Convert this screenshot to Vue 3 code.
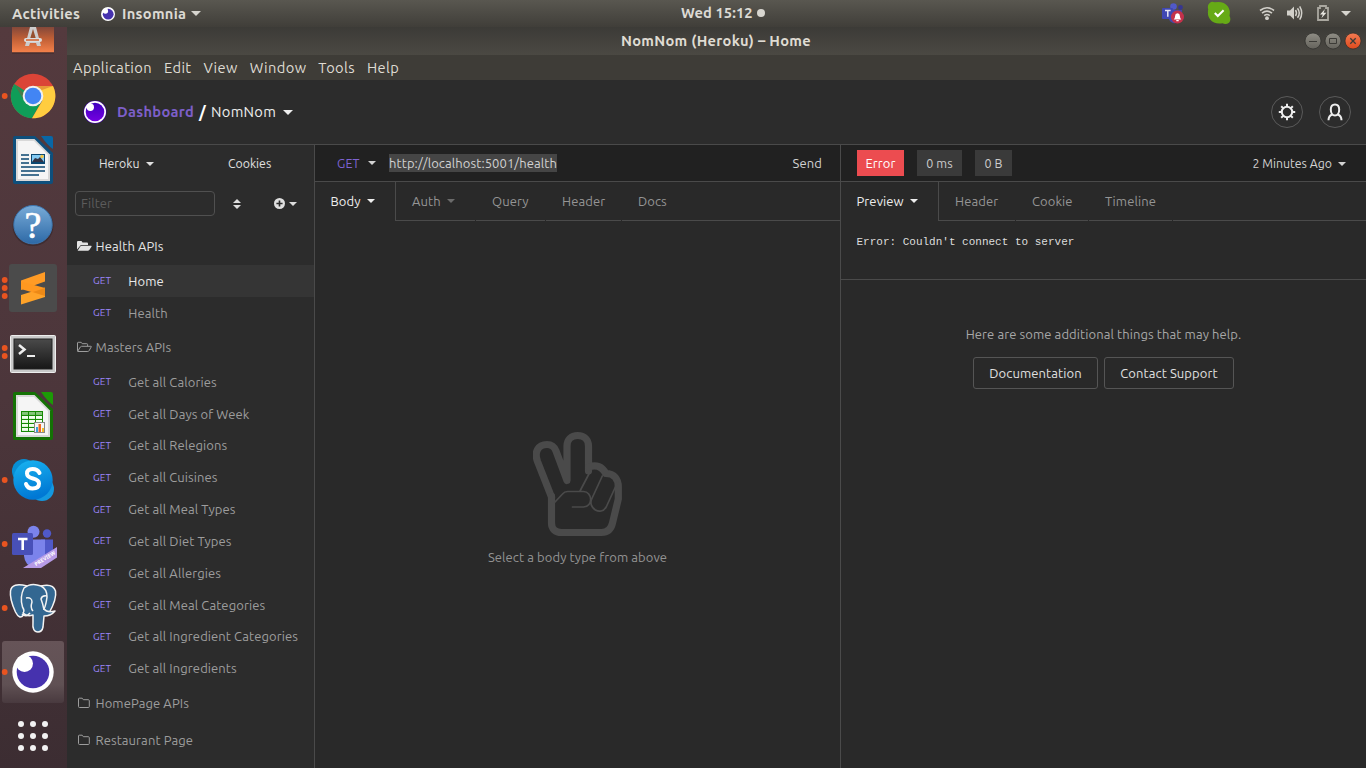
<script setup>
const dots = { one: [0], two: [-4, 4], three: [-8, 0, 8] }
const dock = [
  { id: 'chrome', dots: dots.one },
  { id: 'writer', dots: [] },
  { id: 'help', dots: [] },
  { id: 'sublime', dots: dots.three },
  { id: 'terminal', dots: dots.two },
  { id: 'calc', dots: [] },
  { id: 'skype', dots: dots.one },
  { id: 'teams', dots: dots.one },
  { id: 'postgres', dots: dots.one },
  { id: 'insomnia', dots: dots.one },
  { id: 'grid', dots: [] },
]
const menus = ['Application', 'Edit', 'View', 'Window', 'Tools', 'Help']
const folders = [
  { name: 'Health APIs', icon: 'solid', active: true, items: ['Home', 'Health'] },
  {
    name: 'Masters APIs', icon: 'open',
    items: ['Get all Calories', 'Get all Days of Week', 'Get all Relegions', 'Get all Cuisines', 'Get all Meal Types',
      'Get all Diet Types', 'Get all Allergies', 'Get all Meal Categories', 'Get all Ingredient Categories', 'Get all Ingredients'],
  },
  { name: 'HomePage APIs', icon: 'closed', items: [] },
  { name: 'Restaurant Page', icon: 'closed', items: [] },
]
</script>

<template>
  <div class="desktop">
    <header class="topbar">
      <b class="activities">Activities</b>
      <svg class="tb-logo" viewBox="0 0 14 14"><circle cx="7" cy="7" r="7" fill="#fff" /><circle cx="7.2" cy="7.2" r="5.4" fill="#4632ae" /><circle cx="4.4" cy="4" r="2.7" fill="#fff" /></svg>
      <b class="appname">Insomnia</b>
      <svg class="tb-caret" viewBox="0 0 10 5"><path d="M0 0h10L5 5z" fill="#d6d4ce" /></svg>
      <div class="clock"><b>Wed 15:12</b><i></i></div>
      <svg class="tray" viewBox="1150 0 216 27">
        <circle cx="1173.500" cy="6.500" r="3.300" fill="#5059c9" /><circle cx="1180.500" cy="7.500" r="2.400" fill="#37368f" />
        <path d="M1168 10h14v8q-4 6-9 5-5-2-5-8z" fill="#4549a8" /><rect x="1162" y="8" width="11" height="11" rx="1" fill="#4048b4" />
        <path d="M1165 10.500h5.600M1167.800 10.500v6.200" stroke="#e6e6f4" stroke-width="1.500" fill="none" />
        <circle cx="1177.500" cy="17" r="6.500" fill="#c4314b" /><path d="M1173.700 19.500q1.400-1 1.400-3.500 0-2.600 2.400-2.800 2.400.2 2.400 2.800 0 2.500 1.400 3.500zM1176.300 20h2.400v1.200h-2.400z" fill="#fff" />
        <path transform="translate(.7 0)" d="M1209 3q2-2 5-.8 9-1.500 13 4 3 4 1.800 9.500 2 4-.5 7-3 2-6.500.6-8 1.500-12.500-4-3-4-1.800-10-1.200-4 1.500-6.300z" fill="#66aa16" />
        <path d="M1214.800 13l3 3 5.800-5.800" fill="none" stroke="#fff" stroke-width="2" />
        <g fill="none" stroke="#d2d0ca" stroke-width="1.600"><path d="M1260 10.500q7-5.500 14 0M1262 13.200q5-4.200 10 0M1264.200 15.600q2.800-2.200 5.600 0" /></g><circle cx="1267" cy="18.200" r="1.900" fill="#d2d0ca" />
        <path d="M1287 10.500h3l4-4v13l-4-4h-3z" fill="#d2d0ca" /><g fill="none" stroke="#d2d0ca" stroke-width="1.500"><path d="M1295.500 10q2 3 0 6M1297.500 8.200q3.500 4.800 0 9.600M1299.700 6.300q4 6.700 0 13.400" /></g>
        <path d="M1318 8h2v-2h6v2h2v12h-10z" fill="none" stroke="#aaa8a0" stroke-width="1.800" /><path d="M1325 9l-5 5.600h2.800l-1.400 3.600 5-5.400h-2.800z" fill="#e8e6e0" />
        <path d="M1341 11h10l-5 5z" fill="#d6d4ce" />
      </svg>
    </header>

    <div class="workspace">
      <nav class="dock">
        <svg class="slot first" viewBox="0 27 67 37">
          <defs><linearGradient id="sw" x2="0" y2="1"><stop stop-color="#79443a" /><stop offset=".5" stop-color="#c05f36" /><stop offset="1" stop-color="#f5824b" /></linearGradient></defs>
          <rect x="12" y="25" width="42" height="27.500" fill="url(#sw)" /><path d="M12 53h42" stroke="#3c2828" />
          <path d="M30 27h6l5 19h-4l-1-3h-6l-1 3h-4z" fill="#ccc" /><path d="M33 29l3 10h-6z" fill="#96502f" /><rect x="24" y="38" width="18" height="4" rx="2" fill="#ddd" /><path d="M26 40h13" stroke="#d3602c" stroke-width="1.500" />
        </svg>
        <svg v-for="a in dock" :key="a.id" class="slot" viewBox="0 0 67 64">
          <g v-if="a.id === 'chrome'">
            <circle cx="33" cy="32" r="22.300" fill="#db4437" />
            <path d="M14.300 20A22.300 22.300 0 0 0 32 54.300L42.500 36 33 32z" fill="#0f9d58" />
            <path d="M32 54.300A22.300 22.300 0 0 0 53 22H33v10l9.500 4.500z" fill="#ffcd40" />
            <path d="M33 22h20l-11 4zM14.500 20l9 16 1-6z" fill="#b93a2d" opacity=".35" />
            <circle cx="33" cy="32" r="10.300" fill="#f1f1f1" /><circle cx="33" cy="32" r="8.300" fill="#4285f4" />
          </g>
          <g v-else-if="a.id === 'writer' || a.id === 'calc'" :class="a.id">
            <path class="edge" d="M15 8h20l18 17v29q0 2-2 2H15q-2 0-2-2V10q0-2 2-2z" />
            <path class="corner" d="M41 8h10q2 0 2 2v11q-5-3-12-13z" />
            <path d="M16 11h18.500L50 26.500V53H16z" fill="#d8d8d8" /><path d="M18 13h16l14 14v24H18z" fill="#f5f5f5" />
            <g v-if="a.id === 'writer'">
              <path d="M21 27h8M21 31h8M21 35h8M21 39h24M21 43h24M21 47h18" stroke="#0b4770" stroke-width="1.700" />
              <rect x="31" y="26" width="14" height="10" fill="#0b4770" /><path d="M32 27h12v7H32z" fill="#83caf3" /><path d="M32 34l3-4 3 1 2-2 4 5z" fill="#334" /><circle cx="42" cy="28.500" r="1.700" fill="#f2c544" />
            </g>
            <g v-else>
              <rect x="21" y="27" width="22" height="21" fill="#178a05" /><g fill="#f3fff0"><g v-for="r in 5" :key="r"><rect v-for="c in 3" :key="c" :x="15 + c * 7" :y="24 + r * 4" width="6" height="2.900" :opacity="r === 1 ? .5 : 1" /></g></g>
              <rect x="34.500" y="38.500" width="10" height="10" fill="#f5f5f5" stroke="#888" /><rect x="36" y="43" width="2" height="5" fill="#3ba0dc" /><rect x="38.500" y="40" width="2.500" height="8" fill="#ef6a22" /><rect x="42" y="44" width="2" height="4" fill="#f5bd2b" />
            </g>
          </g>
          <g v-else-if="a.id === 'help'">
            <defs><linearGradient id="hp" x2="0" y2="1"><stop stop-color="#78abd8" /><stop offset="1" stop-color="#2d69a6" /></linearGradient></defs>
            <ellipse cx="33" cy="34" rx="20.500" ry="20" fill="#302126" opacity=".5" />
            <circle cx="33" cy="32.700" r="19.200" fill="url(#hp)" stroke="#3c76b0" /><text x="33" y="46" text-anchor="middle" class="question">?</text>
          </g>
          <g v-else-if="a.id === 'sublime'">
            <rect x="9" y="8" width="48" height="48" rx="3" fill="#4b4b4b" />
            <path d="M21 24.500l24-8.500v9.500l-24 8.500z" fill="#ff9b25" /><path d="M21 39l24-7.500V41l-24 7.500z" fill="#ffa329" /><path d="M21 25.500l24 6.500v8l-24-7z" fill="#ff9820" /><path d="M33 36l12-4v8z" fill="#dc7d10" opacity=".55" />
          </g>
          <g v-else-if="a.id === 'terminal'">
            <defs><linearGradient id="tm" x2="0" y2="1"><stop stop-color="#4a4a4a" /><stop offset="1" stop-color="#171717" /></linearGradient></defs>
            <rect x="10.500" y="15.500" width="45" height="37" rx="1" fill="#c9c9c9" stroke="#eee" /><rect x="14" y="19" width="38" height="30" fill="url(#tm)" stroke="#222" />
            <path d="M19 25l5.500 4.500L19 34" fill="none" stroke="#eee" stroke-width="2.500" /><path d="M27 36h8" stroke="#eee" stroke-width="2" />
          </g>
          <g v-else-if="a.id === 'skype'">
            <defs><linearGradient id="sk" x2=".3" y2="1"><stop stop-color="#1ab5f1" /><stop offset="1" stop-color="#0078d4" /></linearGradient></defs>
            <circle cx="24" cy="23" r="12" fill="#078fd5" /><circle cx="42" cy="41" r="12" fill="#1498df" /><circle cx="33" cy="32" r="19.700" fill="url(#sk)" />
            <path d="M39.500 25q-2-4-7-4-5.500 0-5.500 4.500 0 3.500 6 5t6 5q0 5-6.500 5-5 0-6.500-4.500" fill="none" stroke="#fff" stroke-width="4" stroke-linecap="round" />
          </g>
          <g v-else-if="a.id === 'teams'" transform="translate(0 2)">
            <circle cx="47" cy="19.500" r="4.200" fill="#5059c9" /><path d="M41 25.500h12v14q-2 7-10 5z" fill="#5059c9" />
            <circle cx="33.500" cy="17.800" r="6" fill="#7b83eb" /><path d="M24 25.500h21V42q-2 11-11 11-9-1-10-11z" fill="#7b83eb" />
            <rect x="12" y="19" width="21" height="22" rx="1.500" fill="#4850b8" /><path d="M18 25h9.500M22.700 25v11" stroke="#fff" stroke-width="2.600" fill="none" />
            <path d="M57 33v10.500L41 54H23z" fill="#b79be6" /><text class="preview" transform="translate(36 52.300) rotate(-32)">PREVIEW</text>
          </g>
          <g v-else-if="a.id === 'postgres'" fill="#336791" stroke="#f3f3f3" stroke-width="1.500" stroke-linejoin="round">
            <path d="M41 10q12-3 14.500 5 1.500 8-6.500 22l-7-1z" />
            <path d="M27 10Q12 6 10.500 15q-1 8 5 21 4 8 8 3l3-4z" />
            <path d="M24 12q7-6 17-2 6 3 6 11-1 8-3 12 3 4 11 2-4 5-11 5l-1 11q-1 5-5 5-6 0-5-10v-7q-6 2-10-2 2-2-.500-6-3-10 1.500-19z" />
            <path d="M26 22q6-1 6 4-2 6 1 9M47 20q-5-1-6 3 2 5 3 11" fill="none" />
            <path d="M22 38q4 4 8-1" fill="none" />
          </g>
          <g v-else-if="a.id === 'insomnia'">
            <defs><linearGradient id="hl" x2="0" y2="1"><stop stop-color="#665458" /><stop offset=".7" stop-color="#605154" /><stop offset="1" stop-color="#493a3f" /></linearGradient></defs>
            <rect x="2" y="1" width="62" height="62" rx="3" fill="url(#hl)" />
            <circle cx="33" cy="32" r="20.700" fill="#fff" /><circle cx="33" cy="32" r="16.300" fill="#4632ae" /><circle cx="24.500" cy="23.500" r="8.500" fill="#fff" />
          </g>
          <g v-else fill="#f2f2f2"><g v-for="r in 3" :key="r"><circle v-for="c in 3" :key="c" :cx="9 + c * 12" :cy="8 + r * 12" r="3" /></g></g>
          <circle v-for="d in a.dots" :key="d" cx="4.700" :cy="32 + d" r="2.900" fill="#e95420" />
        </svg>
      </nav>

      <main class="window">
        <div class="titlebar">
          <b>NomNom (Heroku) – Home</b>
          <svg class="winbtns" viewBox="0 0 60 20">
            <defs><linearGradient id="wb" x2="0" y2="1"><stop stop-color="#8f8d85" /><stop offset="1" stop-color="#65635c" /></linearGradient><linearGradient id="wc" x2="0" y2="1"><stop stop-color="#f47b52" /><stop offset="1" stop-color="#df4a1d" /></linearGradient></defs>
            <g stroke="#2d2c29" stroke-width=".7"><circle cx="10" cy="10" r="8" fill="url(#wb)" /><circle cx="30" cy="10" r="8" fill="url(#wb)" /><circle cx="50" cy="10" r="8" fill="url(#wc)" /></g>
            <g fill="none" stroke="#3c3b37"><path d="M6 10.500h8M26.500 7.500h7v5h-7z" /><path d="M47.300 7.300l5.400 5.400M52.700 7.300l-5.400 5.400" stroke-width="1.300" /></g>
          </svg>
        </div>
        <div class="menubar"><span v-for="m in menus" :key="m">{{ m }}</span></div>
        <div class="apphead">
          <svg class="logo" viewBox="0 0 24 24"><defs><linearGradient id="lg" x2="0" y2="1"><stop stop-color="#4000bf" /><stop offset="1" stop-color="#7400e1" /></linearGradient></defs><circle cx="12" cy="12" r="11.500" fill="#3c009c" /><circle cx="12" cy="12" r="11" fill="#fff" /><circle cx="12" cy="12" r="9.300" fill="url(#lg)" /><circle cx="7.300" cy="7.300" r="3.700" fill="#fff" /></svg>
          <b class="dash">Dashboard</b><b class="slash">/</b><span class="project">NomNom</span><i class="caret big"></i>
          <div class="round gear"><svg viewBox="0 0 20 20" fill="none" stroke="#eee"><circle cx="10" cy="10" r="5.200" stroke-width="2" /><path d="M10 1.800v2.500M10 15.700v2.500M1.800 10h2.500M15.700 10h2.500M4.200 4.200l1.900 1.900M13.900 13.900l1.900 1.900M15.800 4.200l-1.900 1.900M6.100 13.900l-1.900 1.900" stroke-width="2" /></svg></div>
          <div class="round"><svg viewBox="0 0 20 20" fill="none" stroke="#eee" stroke-width="2"><path d="M10 2.500c-3 0-4.200 2.200-4.200 5 0 3.500 1.700 6 4.200 6s4.200-2.500 4.200-6c0-2.800-1.200-5-4.200-5zM7.200 12.500Q3.500 14 3.500 18.300M12.800 12.500q3.700 1.500 3.700 5.800" /></svg></div>
        </div>

        <div class="panes">
          <aside class="sidebar">
            <div class="envrow"><span class="env">Heroku<i class="caret"></i></span><span class="cookies">Cookies</span></div>
            <div class="filterrow">
              <div class="filter">Filter</div>
              <svg class="sort" viewBox="0 0 8 10"><path d="M4 0l4 4H0zM0 6h8l-4 4z" fill="#ddd" /></svg>
              <svg class="plus" viewBox="0 0 10 10"><circle cx="5" cy="5" r="5" fill="#e0e0e0" /><path d="M5 2.200v5.600M2.200 5h5.600" stroke="#2c2c2c" stroke-width="1.500" /></svg>
              <i class="caret"></i>
            </div>
            <div v-for="f in folders" :key="f.name">
              <div class="folder" :class="{ active: f.active }">
                <svg v-if="f.icon === 'solid'" viewBox="0 0 15 12"><path d="M0 9.500V2q0-1 1-1h3.500l1 1.500H10q1 0 1 1V5H4.500q-1 0-1.500 1z" fill="currentColor" /><path d="M4.500 5.800H14q1 0 .5 1L12.300 10q-.5.800-1.500.8H.6L3.300 6.500q.4-.7 1.200-.7z" fill="currentColor" /></svg>
                <svg v-else-if="f.icon === 'open'" viewBox="0 0 15 12"><path d="M.5 9.800V2q0-.7.700-.7h3l1 1.400h4.600q.8 0 .8.800v1.800M.7 10.300L3.300 6q.5-.7 1.200-.7h9.300q.8 0 .4.700L12 9.800q-.4.700-1.200.7H1q-.5 0-.5-.7" fill="none" stroke="currentColor" /></svg>
                <svg v-else viewBox="0 0 15 12"><path d="M1.500 2q0-.8.800-.8h2.900l1.100 1.500h5q1 0 1 1v5.800q0 1-1 1h-8.800q-1 0-1-1z" fill="none" stroke="currentColor" /></svg>
                <span>{{ f.name }}</span>
              </div>
              <div v-for="r in f.items" :key="r" class="req" :class="{ active: r === 'Home' }"><em>GET</em><span>{{ r }}</span></div>
            </div>
          </aside>

          <section class="request">
            <div class="urlrow"><span class="method">GET</span><i class="caret"></i><span class="url">http://localhost:5001/health</span><span class="send">Send</span></div>
            <div class="tabs">
              <div class="tab current t-body">Body<i class="caret"></i></div>
              <div class="tab t-auth">Auth<i class="caret"></i></div>
              <div class="tab t-query">Query</div>
              <div class="tab t-header">Header</div>
              <div class="tab rest">Docs</div>
            </div>
            <div class="empty">
              <svg class="hand" viewBox="533 431 90 106" fill="none" stroke="#4a4a4a" stroke-linejoin="round" stroke-linecap="round">
                <path d="M551.500 497L537.500 461.500C534 452 538 444.500 547 444.500c5 0 7.500 2.500 9 6.500l11 29.500V446c0-6 4-10.500 10.700-10.500S588.500 440 588.500 446v25" stroke-width="7.200" />
                <path d="M551.500 496v27c0 6 4 9.500 10 9.500h40c6 0 9.500-3 11-9.500l5.800-24v-12c0-8-4-13.500-12.500-13.500-3.500-6.500-9.500-9.500-17-6.500" stroke-width="7.200" />
                <g stroke-width="1.700"><path d="M555 502l7.500-8q2-2.500 5-2.500h16c9 0 10 15.500 0 15.500h-11M580 491l11-21M591.700 499l10.600-23M591.700 499c-4 9 9 17.500 14.500 8l11.500-25" /></g>
              </svg>
              <p>Select a body type from above</p>
            </div>
          </section>

          <section class="response">
            <div class="urlrow"><span class="tag err">Error</span><span class="tag ms">0 ms</span><span class="tag bytes">0 B</span><span class="ago">2 Minutes Ago<i class="caret"></i></span></div>
            <div class="tabs">
              <div class="tab current t-preview">Preview<i class="caret"></i></div>
              <div class="tab t-rheader">Header</div>
              <div class="tab t-cookie">Cookie</div>
              <div class="tab t-time">Timeline</div>
              <div class="tab rest"></div>
            </div>
            <pre class="error">Error: Couldn't connect to server</pre>
            <div class="help">
              <p>Here are some additional things that may help.</p>
              <div class="btns"><button class="doc">Documentation</button><button class="sup">Contact Support</button></div>
            </div>
          </section>
        </div>
      </main>
    </div>
  </div>
</template>

<style>
body { overflow: hidden; background: #2c2c2c; }
</style>
<style scoped>
* { box-sizing: border-box; }
.desktop { width: 1366px; height: 768px; overflow: hidden; display: flex; flex-direction: column; font: 13px/16px Ubuntu, "Noto Sans", sans-serif; letter-spacing: .09px; color: #ddd; white-space: nowrap; }
svg { display: block; flex: none; }
p { margin: 0; }
.topbar { height: 27px; flex: none; display: flex; align-items: center; position: relative; background: linear-gradient(#595750, #403e39); color: #dcdad4; font-size: 14.670px; letter-spacing: .3px; padding-left: 12px; }
.activities { width: 89px; }
.tb-logo { width: 14px; height: 14px; }
.appname { margin-left: 7px; width: 69px; }
.tb-caret { width: 10px; height: 5px; }
.clock { position: absolute; left: 681px; top: 5px; display: flex; align-items: center; letter-spacing: .1px; }
.clock i { width: 8px; height: 8px; border-radius: 50%; background: #d8d6d0; margin-left: 4px; }
.tray { width: 216px; height: 27px; margin-left: auto; }
.workspace { flex: 1; min-height: 0; display: flex; }
.dock { width: 67px; flex: none; background: linear-gradient(#543a3e, #4c363b 50%, #3c2d32); }
.slot { width: 67px; height: 64px; }
.slot.first { height: 37px; }
.writer .edge { fill: #0e4f7c; }
.writer .corner { fill: #0867a6; }
.calc .edge { fill: #147205; }
.calc .corner { fill: #1c9a06; }
.question { font: 38px "Liberation Serif", serif; fill: #fff; stroke: #fff; stroke-width: .6px; }
.preview { font: bold 5.200px "Noto Sans", sans-serif; fill: #fff; }
.window { flex: 1; min-width: 0; display: flex; flex-direction: column; background: #2c2c2c; }
.titlebar { height: 28px; flex: none; position: relative; display: flex; align-items: center; justify-content: center; background: linear-gradient(#3c3b37, #4b4943); color: #dfdbd2; font-size: 14.670px; letter-spacing: .3px; padding-right: 1px; }
.winbtns { position: absolute; right: 3px; top: 4px; width: 60px; height: 20px; }
.menubar { height: 25px; flex: none; display: flex; align-items: center; gap: 11.900px; padding-left: 6px; background: #3e3c37; color: #dfdbd2; font-size: 14.670px; letter-spacing: .4px; }
.apphead { height: 65px; flex: none; display: flex; align-items: center; padding: 0 15.500px 0 16px; border-bottom: 1px solid #4a4a4a; font-size: 14.670px; letter-spacing: .3px; color: #eee; }
.logo { width: 24px; height: 24px; margin-right: 10px; }
.dash { color: #7d5fc9; width: 82px; }
.slash { width: 12px; color: #fff; font-size: 16px; letter-spacing: 0; }
.project { width: 72px; }
.caret { display: inline-block; width: 0; height: 0; border: 4.500px solid transparent; border-top-color: currentColor; border-bottom: 0; }
.caret.big { border-width: 5px 5px 0; }
.round { width: 32px; height: 32px; border: 1px solid #5a5a5a; border-radius: 50%; display: grid; place-items: center; }
.round svg { width: 20px; height: 20px; }
.gear { margin-left: auto; margin-right: 16px; }
.panes { flex: 1; min-height: 0; display: flex; }
.sidebar { width: 248px; flex: none; border-right: 1px solid #4a4a4a; }
.envrow { height: 37px; display: flex; align-items: center; padding: 1px 0 0 32px; color: #e0e0e0; font-size: 12.300px; letter-spacing: 0; }
.env { width: 129px; }
.env .caret { margin: 0 0 2px 7px; }
.filterrow { height: 46px; display: flex; align-items: center; padding: 0 0 3px 8px; }
.filter { width: 140px; height: 25px; border: 1px solid #505050; border-radius: 4px; padding: 3px 5px; color: #5c5c5c; }
.sort { width: 8px; height: 10px; margin: 0 33px 0 17.500px; }
.plus { width: 11px; height: 11px; margin: 0 4.500px 0 0; }
.folder { height: 37.200px; display: flex; align-items: center; padding-left: 10px; color: #9d9d9d; }
.folder svg { width: 15px; height: 12px; margin-right: 3.500px; }
.folder.active { color: #e4e4e4; height: 37px; padding-bottom: 1px; }
.req { height: 31.830px; display: flex; align-items: center; padding-left: 26px; color: #9d9d9d; }
.req em { font-style: normal; font-size: 10px; letter-spacing: .1px; width: 35.300px; padding-top: 1px; color: #9c86fa; }
.req.active { background: #353535; color: #e8e8e8; }
.request { width: 526px; flex: none; border-right: 1px solid #4a4a4a; display: flex; flex-direction: column; background: #292929; }
.response { flex: 1; min-width: 0; background: #292929; }
.urlrow { height: 37px; flex: none; display: flex; align-items: center; background: #212121; border-bottom: 1px solid #4a4a4a; color: #d2d2d2; }
.method { margin-left: 22px; width: 31px; color: #7d63d0; font-size: 12.500px; }
.url { margin-left: 13px; height: 18px; line-height: 18px; background: #454545; width: 168px; }
.send { margin-left: auto; margin-right: 18px; }
.tabs { height: 39px; flex: none; display: flex; color: #959595; }
.tab { display: flex; align-items: center; padding-left: 16px; border-bottom: 1px solid #4a4a4a; }
.tab.current { color: #eee; border-right: 1px solid #4a4a4a; border-bottom: 0; padding: 0 0 1px 15.500px; }
.tab .caret { margin-left: 6.500px; }
.t-auth .caret { color: #6b6b6b; }
.tab:not(.current):not(.rest) { margin-right: 1px; }
.t-body { width: 81px; }
.t-auth { width: 79px; }
.t-query { width: 69px; }
.t-header { width: 75px; }
.rest { flex: 1; }
.empty { flex: 1; display: flex; flex-direction: column; align-items: center; color: #939393; padding-top: 210px; }
.hand { width: 90px; height: 106px; margin-bottom: 12px; }
.tag { height: 26px; line-height: 26px; text-align: center; background: #3a3a3a; color: #ccc; margin-right: 13px; font-size: 12.500px; }
.err { background: #ec4c50; color: #fff; width: 47px; margin-left: 16px; font-size: 13px; }
.ms { width: 45px; }
.bytes { width: 37px; }
.ago { margin-left: auto; margin-right: 20px; padding-top: 1px; font-size: 12.300px; letter-spacing: 0; }
.ago .caret { margin: 0 0 2px 6px; }
.t-preview { width: 98px; }
.t-rheader { width: 76px; }
.t-cookie { width: 72px; }
.t-time { width: 83px; }
.error { margin: 0; height: 59px; border-bottom: 1px solid #4a4a4a; padding: 13px 15.500px; font: 11px/16px "Liberation Mono", monospace; letter-spacing: 0; color: #ddd; }
.help { display: flex; flex-direction: column; align-items: center; padding-top: 46px; color: #a7a7a7; }
.btns { display: flex; gap: 6px; margin-top: 15px; }
button { height: 32px; border: 1px solid #555; border-radius: 3px; background: transparent; color: #e0e0e0; font: inherit; letter-spacing: inherit; padding: 0; }
.doc { width: 125px; }
.sup { width: 130px; }
</style>
